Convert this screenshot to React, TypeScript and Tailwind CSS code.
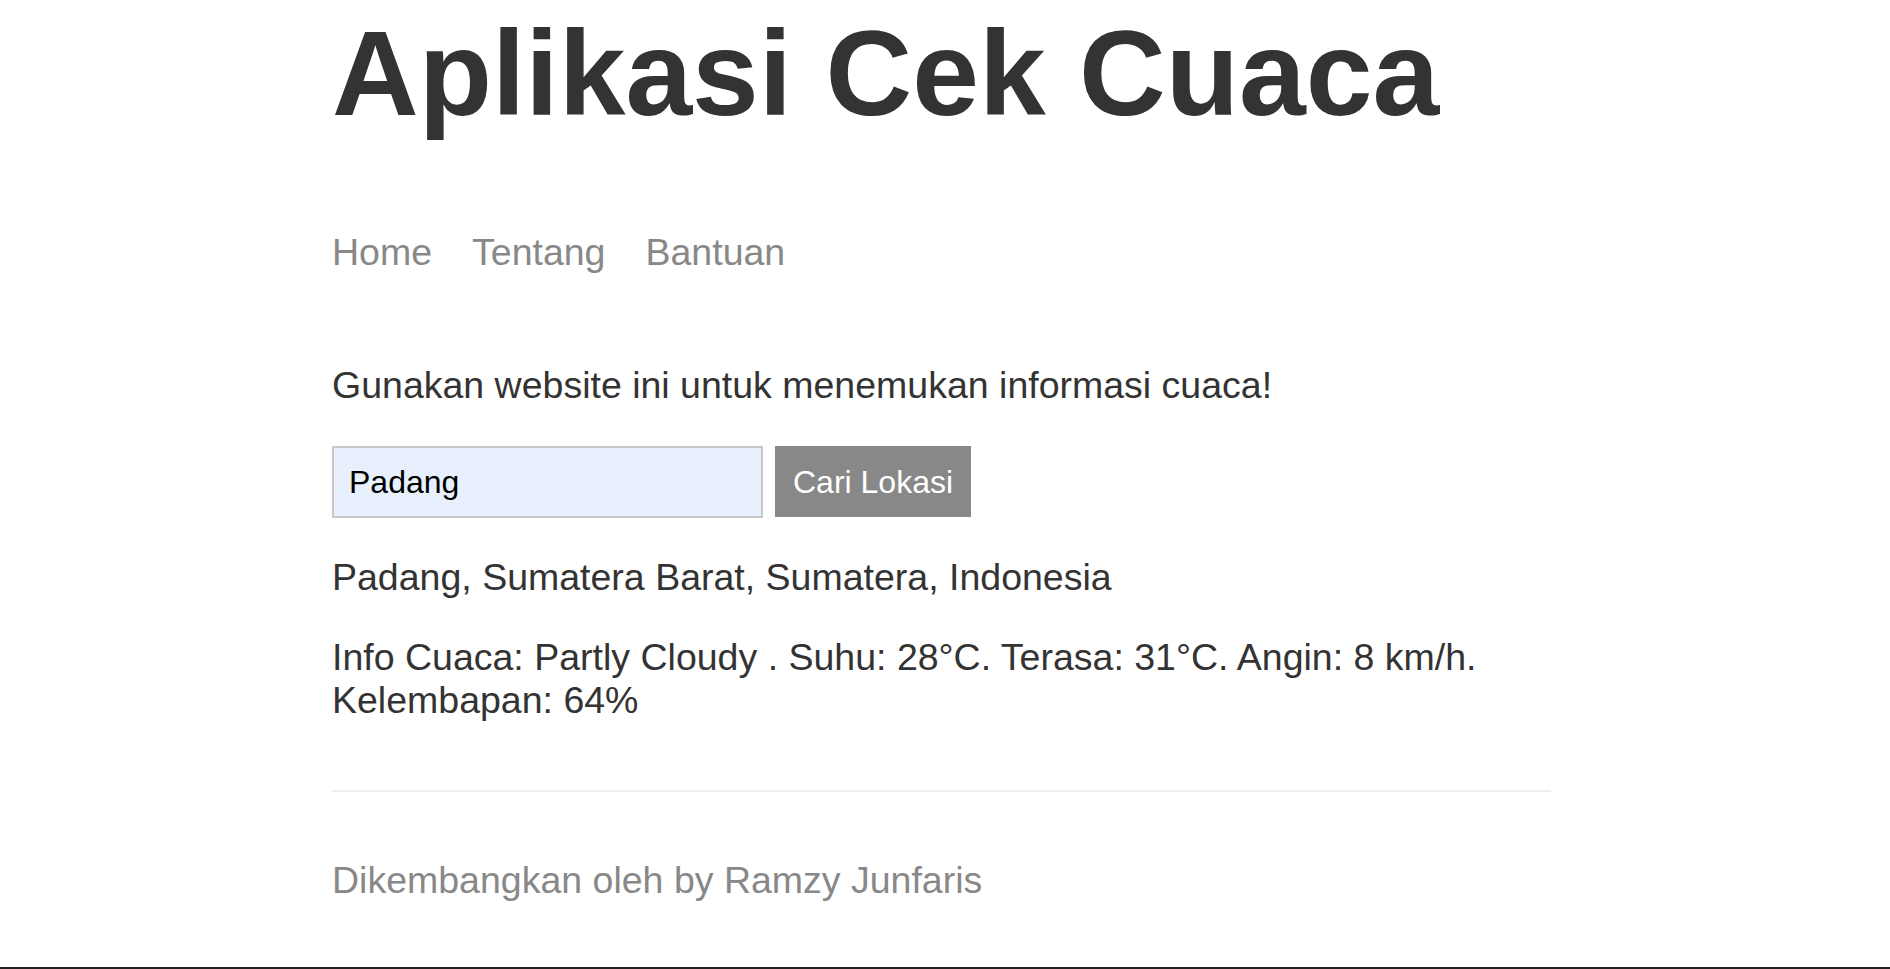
export default function App() {
  return (
    <div className="h-screen border-b-2 border-[#231f20] bg-white flex justify-center pr-[7px] font-['Liberation_Sans',Arial,sans-serif] text-[#333333]">
      <div className="w-[1219px] flex flex-col">
        <header className="mt-[4px]">
          <h1 className="text-[120px] leading-[138px] font-bold">Aplikasi Cek Cuaca</h1>
          <nav className="mt-[89px] flex gap-[40px] text-[37.5px] leading-[43px] text-[#888888]">
            <a href="#">Home</a>
            <a href="#">Tentang</a>
            <a href="#">Bantuan</a>
          </nav>
        </header>

        <main className="text-[37.5px]">
          <p className="mt-[90px] leading-[43px]">Gunakan website ini untuk menemukan informasi cuaca!</p>
          <form className="mt-[39px] flex gap-[12px]" onSubmit={(e) => e.preventDefault()}>
            <input
              defaultValue="Padang"
              className="w-[431px] h-[72px] border-2 border-[#c8c8c8] bg-[#e8f0fe] px-[15px] text-[32px] text-black outline-none"
            />
            <button className="h-[71px] w-[196px] border-2 border-[#888888] bg-[#888888] px-[15px] text-[32px] text-white">
              Cari Lokasi
            </button>
          </form>
          <p className="mt-[37.5px] leading-[43px]">Padang, Sumatera Barat, Sumatera, Indonesia</p>
          <p className="mt-[37.5px] leading-[43px]">
            Info Cuaca: Partly Cloudy . Suhu: 28°C. Terasa: 31°C. Angin: 8 km/h. Kelembapan: 64%
          </p>
        </main>

        <footer className="mt-[67.5px] border-t-2 border-[#eeeeee] pt-[67px] text-[37.5px] leading-[43px] text-[#888888]">
          <p>Dikembangkan oleh by Ramzy Junfaris</p>
        </footer>
      </div>
    </div>
  );
}
